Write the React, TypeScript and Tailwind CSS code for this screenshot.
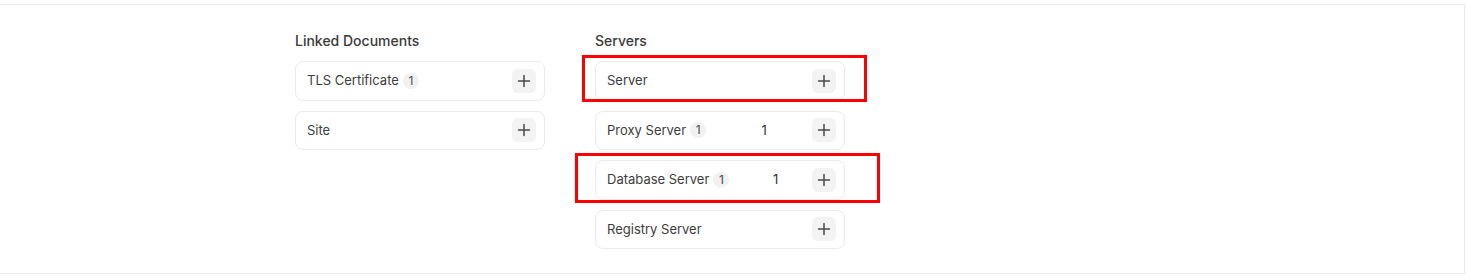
import React from "react";

function Plus() {
  return (
    <button className="flex h-[24px] w-[24px] items-center justify-center rounded-[6px] bg-[#f3f3f3]">
      <svg width="14" height="14" viewBox="0 0 14 14" fill="none">
        <path d="M7 1.5v11M1.5 7h11" stroke="#4a4a4a" strokeWidth="1.5" strokeLinecap="round" />
      </svg>
    </button>
  );
}

type Item = { label: string; badge?: string; count?: string };

function Card({ item }: { item: Item }) {
  return (
    <div className="flex h-[39.5px] items-center justify-between rounded-[8px] border border-[#ebebeb] bg-white pl-[11px] pr-[8px]">
      <div className="flex items-center gap-[4px]">
        <span className="text-[13px] leading-none text-[#3d3d3d]">{item.label}</span>
        {item.badge && (
          <span className="flex h-[16px] w-[16px] items-center justify-center rounded-full bg-[#f1f1f1] text-[12px] leading-none text-[#4a4a4a]">
            {item.badge}
          </span>
        )}
      </div>
      {item.count && <span className="ml-[10px] text-[13px] leading-none text-[#333]">{item.count}</span>}
      <Plus />
    </div>
  );
}

function Column({ title, items }: { title: string; items: Item[] }) {
  return (
    <div className="flex w-[250px] flex-col">
      <div className="mb-[10px] h-[20px] text-[14px] font-medium leading-[20px] text-[#3a3a3a]">{title}</div>
      <div className="flex flex-col gap-[10px]">
        {items.map((it) => (
          <Card key={it.label} item={it} />
        ))}
      </div>
    </div>
  );
}

export default function App() {
  return (
    <div className="relative h-[276px] w-[1466px] bg-white pt-[4px]" style={{ fontFamily: "Inter, 'Noto Sans', sans-serif" }}>
      <div className="h-[270px] w-[1465px] border-b border-r border-t border-[#ebebeb] pl-[295px] pt-[26px]">
        <div className="flex gap-[50px]">
          <Column
            title="Linked Documents"
            items={[{ label: "TLS Certificate", badge: "1" }, { label: "Site" }]}
          />
          <Column
            title="Servers"
            items={[
              { label: "Server" },
              { label: "Proxy Server", badge: "1", count: "1" },
              { label: "Database Server", badge: "1", count: "1" },
              { label: "Registry Server" },
            ]}
          />
        </div>
      </div>
      <div className="pointer-events-none absolute left-[582px] top-[55px] h-[47px] w-[285px] border-[3px] border-[#ff0000]" />
      <div className="pointer-events-none absolute left-[575px] top-[153px] h-[50px] w-[305px] border-[3px] border-[#ff0000]" />
    </div>
  );
}
